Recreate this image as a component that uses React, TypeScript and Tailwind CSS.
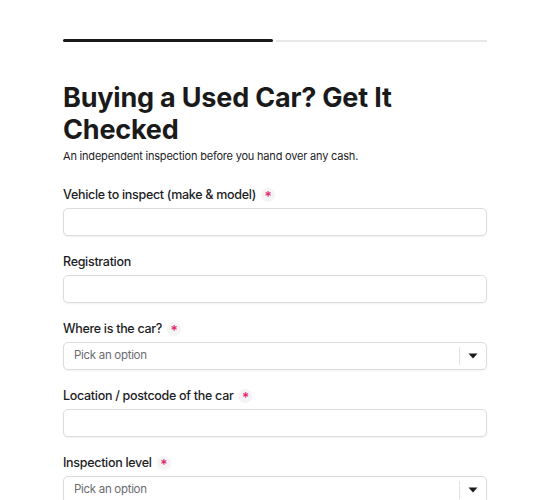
import React from "react";

function Req() {
  return (
    <span className="ml-[5px] inline-flex h-[14px] w-[14px] items-center justify-center rounded-full bg-[#f4f4f5] text-[14px] leading-none text-[#e5246f]">
      <span className="mt-[4px]">*</span>
    </span>
  );
}

function Label({ text, required }: { text: string; required?: boolean }) {
  return (
    <div className="flex h-[20px] items-center text-[12.5px] font-medium leading-[20px] tracking-[-0.3px] text-[#1d1d1f]">
      <span>{text}</span>
      {required && <Req />}
    </div>
  );
}

function TextInput() {
  return (
    <div className="mt-[3px] h-[28px] w-full rounded-[5px] border border-[#dcdcdf] bg-white shadow-[0_1px_2px_rgba(0,0,0,0.06)]" />
  );
}

function Select() {
  return (
    <div className="mt-[3px] flex h-[28px] w-full items-center rounded-[5px] border border-[#dcdcdf] bg-white shadow-[0_1px_2px_rgba(0,0,0,0.06)]">
      <span className="flex-1 pl-[10px] text-[11.5px] tracking-[-0.3px] text-[#6b6b70]">Pick an option</span>
      <span className="h-[18px] w-px bg-[#e2e2e5]" />
      <span className="flex w-[26px] items-center justify-center">
        <svg width="10" height="6" viewBox="0 0 10 6">
          <path d="M0.5 0.5 H9.5 L5 5.5 Z" fill="#1a1a1a" />
        </svg>
      </span>
    </div>
  );
}

export default function App() {
  return (
    <div
      className="min-h-[500px] bg-white"
      style={{ fontFamily: "Inter, 'Noto Sans', sans-serif" }}
    >
      <div className="mx-auto w-[424px] pt-[39px]">
        <div className="flex items-center gap-[3px]">
          <div className="h-[3px] w-[210px] rounded-full bg-[#1a1a1a]" />
          <div className="h-[2px] flex-1 bg-[#e8e8e8]" />
        </div>
        <h1 className="mt-[40px] text-[27px] font-bold leading-[32px] tracking-[-0.2px] text-[#1a1a1a]">
          Buying a Used Car? Get It Checked
        </h1>
        <p className="mt-[1px] text-[11px] leading-[18px] tracking-[-0.2px] text-[#1d1d1f]">
          An independent inspection before you hand over any cash.
        </p>
        <div className="mt-[20px] flex flex-col gap-[16px]">
          <div>
            <Label text="Vehicle to inspect (make & model)" required />
            <TextInput />
          </div>
          <div>
            <Label text="Registration" />
            <TextInput />
          </div>
          <div>
            <Label text="Where is the car?" required />
            <Select />
          </div>
          <div>
            <Label text="Location / postcode of the car" required />
            <TextInput />
          </div>
          <div>
            <Label text="Inspection level" required />
            <Select />
          </div>
        </div>
      </div>
    </div>
  );
}
